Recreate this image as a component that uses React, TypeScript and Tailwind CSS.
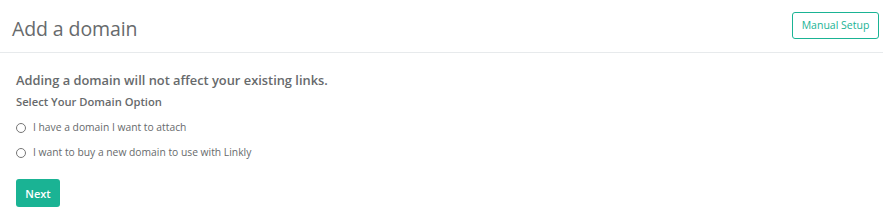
import React from "react";

export default function App() {
  return (
    <div className="w-[883px] h-[222px] bg-white text-[#676a6c]" style={{ fontFamily: '"Open Sans", sans-serif' }}>
      <div className="flex items-start justify-between h-[53px] border-b border-[#e7eaec] pl-3 pr-1">
        <h1 className="text-[19.5px] leading-[24px] font-normal text-[#676a6c] mt-[17px] tracking-[-0.1px]">Add a domain</h1>
        <button className="mt-[12px] w-[87px] h-[27px] border border-[#1ab394] rounded-[3px] text-[10.5px] text-[#1ab394] leading-none bg-white">
          Manual Setup
        </button>
      </div>
      <div className="px-4 pt-[18px]">
        <div className="text-[12.85px] font-semibold leading-[18px]">Adding a domain will not affect your existing links.</div>
        <div className="text-[11.2px] font-semibold leading-[16px] mt-[5px]">Select Your Domain Option</div>
        <div className="mt-[10px] flex flex-col gap-[9px]">
          <label className="flex items-center h-[16px] text-[10.3px]">
            <span className="w-[8px] h-[8px] rounded-full border border-[#767676] mr-[7px] box-content" />
            I have a domain I want to attach
          </label>
          <label className="flex items-center h-[16px] text-[10.3px]">
            <span className="w-[8px] h-[8px] rounded-full border border-[#767676] mr-[7px] box-content" />
            I want to buy a new domain to use with Linkly
          </label>
        </div>
        <button className="mt-[18px] w-[44px] h-[28px] rounded-[3px] bg-[#1ab394] text-white text-[11px] font-semibold leading-none">
          Next
        </button>
      </div>
    </div>
  );
}
